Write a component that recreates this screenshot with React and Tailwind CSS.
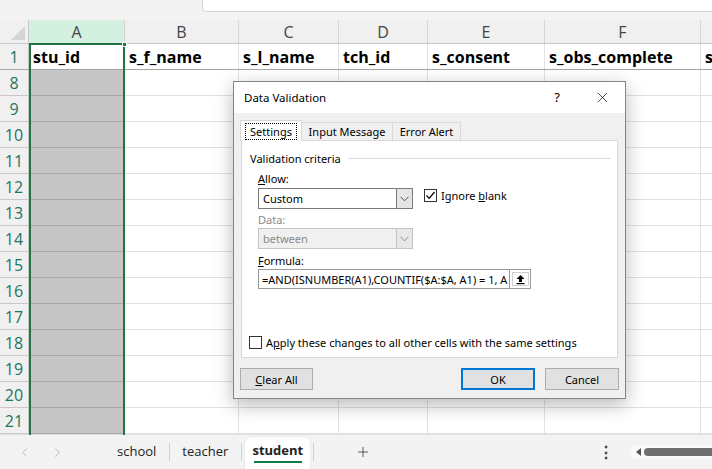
import React from 'react';
import { ChevronLeft, ChevronRight, Plus, X } from 'lucide-react';

const columns = [
  { letter: 'A', title: 'stu_id', width: 'w-[96px]' },
  { letter: 'B', title: 's_f_name', width: 'w-[114px]' },
  { letter: 'C', title: 's_l_name', width: 'w-[100px]' },
  { letter: 'D', title: 'tch_id', width: 'w-[89px]' },
  { letter: 'E', title: 's_consent', width: 'w-[117px]' },
  { letter: 'F', title: 's_obs_complete', width: 'w-[156px]' },
  { letter: '', title: 's', width: 'w-[100px]' },
];

const rows = ['8', '9', '10', '11', '12', '13', '14', '15', '16', '17', '18', '19', '20', '21'];

const Checkbox = ({ checked }) => (
  <div className="w-[13px] h-[13px] shrink-0 border border-[#333] bg-white flex items-center justify-center">
    {checked && (
      <svg width="11" height="11" viewBox="0 0 11 11">
        <path d="M1.5 5.5 L4.2 8.3 L9.5 2" fill="none" stroke="#000" strokeWidth="1.2" />
      </svg>
    )}
  </div>
);

const Chevron = ({ color }) => (
  <svg width="9" height="6" viewBox="0 0 9 6">
    <path d="M0.5 0.8 L4.5 4.8 L8.5 0.8" fill="none" stroke={color} strokeWidth="1" />
  </svg>
);

const DataValidation = () => (
  <div className="absolute left-[233px] top-[81px] w-[393px] h-[318px] border border-[#858585] bg-[#f0f0f0] shadow-[0_6px_18px_rgba(0,0,0,0.28)] text-[11px] text-black font-['Noto_Sans',sans-serif] leading-none">
    {/* title bar */}
    <div className="h-[31px] bg-white flex items-center pl-[10px] pr-[14px]">
      <span className="text-[11.5px]">Data Validation</span>
      <span className="ml-auto mr-[34px] text-[13px]">?</span>
      <X size={17} strokeWidth={1} />
    </div>

    {/* tabs */}
    <div className="flex items-end pl-[6px] pt-[7px]">
      <div className="w-[62px] h-[21px] bg-white border border-[#d9d9d9] border-b-0 flex items-center justify-center relative z-10 -mb-px">
        <span className="border border-dotted border-black px-[4px] py-[2px]">Settings</span>
      </div>
      <div className="w-[91px] h-[18px] border border-[#d9d9d9] border-l-0 border-b-0 bg-[#f0f0f0] flex items-center justify-center">Input Message</div>
      <div className="w-[68px] h-[18px] border border-[#d9d9d9] border-l-0 border-b-0 bg-[#f0f0f0] flex items-center justify-center">Error Alert</div>
    </div>

    {/* tab panel */}
    <div className="ml-[7px] w-[377px] h-[218px] bg-white border border-[#d9d9d9] flex flex-col">
      <div className="mt-[9px] h-[16px] flex items-center pl-[8px] pr-[6px]">
        <span>Validation criteria</span>
        <div className="flex-1 ml-[7px] h-px bg-[#dcdcdc]" />
      </div>

      <div className="pl-[16px] flex flex-col">
        <div className="mt-[5px] h-[14px] flex items-center">
          <span><span className="underline">A</span>llow:</span>
        </div>
        <div className="mt-[3px] flex items-start">
          <div className="w-[155px] h-[21px] border border-[#7a7a7a] bg-white flex items-center">
            <span className="pl-[4px]">Custom</span>
            <div className="ml-auto w-[16px] h-full border-l border-[#7a7a7a] bg-[#e5e5e5] flex items-center justify-center">
              <Chevron color="#555" />
            </div>
          </div>
          <div className="ml-[11px] mt-[1px] flex items-center">
            <Checkbox checked />
            <span className="ml-[4px]">Ignore <span className="underline">b</span>lank</span>
          </div>
        </div>

        <div className="mt-[3px] h-[14px] flex items-center text-[#8a8a8a]">Data:</div>
        <div className="mt-[2px] w-[155px] h-[21px] border border-[#c4c4c4] bg-[#f0f0f0] flex items-center text-[#8a8a8a]">
          <span className="pl-[4px]">between</span>
          <div className="ml-auto w-[16px] h-full border-l border-[#c4c4c4] bg-[#e8e8e8] flex items-center justify-center">
            <Chevron color="#888" />
          </div>
        </div>

        <div className="mt-[4px] h-[14px] flex items-center">
          <span><span className="underline">F</span>ormula:</span>
        </div>
        <div className="mt-[2px] flex h-[20px] w-[273px] border border-[#9a9a9a] bg-white">
          <div className="flex-1 overflow-hidden whitespace-nowrap flex items-center pl-[3px]">
            =AND(ISNUMBER(A1),COUNTIF($A:$A, A1) = 1, A
          </div>
          <div className="w-[21px] h-full border-l border-[#9a9a9a] bg-white flex items-center justify-center">
            <div className="w-[17px] h-[14px] border border-[#d0d0d0] flex items-center justify-center">
              <svg width="11" height="11" viewBox="0 0 11 11">
                <path d="M5.5 1 L1.5 5 H4 V8 H7 V5 H9.5 Z" fill="#000" />
                <rect x="1.5" y="9" width="8" height="1.2" fill="#000" />
              </svg>
            </div>
          </div>
        </div>
      </div>

      <div className="mt-[47px] pl-[7px] flex items-center">
        <Checkbox />
        <span className="ml-[4px]">A<span className="underline">p</span>ply these changes to all other cells with the same settings</span>
      </div>
    </div>

    {/* buttons */}
    <div className="mt-[10px] px-[6px] flex items-center">
      <div className="w-[73px] h-[22px] bg-[#e1e1e1] border border-[#adadad] flex items-center justify-center">
        <span><span className="underline">C</span>lear All</span>
      </div>
      <div className="ml-auto w-[74px] h-[22px] bg-[#e1e1e1] border-2 border-[#0078d7] flex items-center justify-center">OK</div>
      <div className="ml-[10px] w-[74px] h-[22px] bg-[#e1e1e1] border border-[#adadad] flex items-center justify-center">Cancel</div>
    </div>
  </div>
);

const App = () => {
  return (
    <div className="relative w-[712px] h-[469px] overflow-hidden bg-white font-['Open_Sans',sans-serif] flex flex-col">
      {/* formula bar strip */}
      <div className="h-[20px] shrink-0 bg-[#f3f3f3] flex">
        <div className="ml-[202px] flex-1 h-[13px] -mt-px bg-white border border-r-0 border-[#d3d3d3] rounded-bl-[5px]" />
      </div>

      {/* column headers */}
      <div className="h-[24px] shrink-0 flex bg-[#f0f0f0] border-b border-[#c8c8c8]">
        <div className="w-[29px] shrink-0 border-r border-[#c8c8c8] flex items-end justify-end p-[3px]">
          <svg width="14" height="14" viewBox="0 0 14 14">
            <path d="M14 0 L14 14 L0 14 Z" fill="#d4d4d4" />
          </svg>
        </div>
        {columns.map((c, i) => (
          <div
            key={i}
            className={`${c.width} shrink-0 flex items-center justify-center border-r border-[#d6d6d6] text-[16px] text-[#444] ${c.letter === 'A' ? 'bg-[#d3f0e0]' : ''}`}
          >
            {c.letter}
          </div>
        ))}
      </div>

      {/* row 1 (frozen header row) */}
      <div className="h-[26px] shrink-0 flex border-b border-[#a6a6a6]">
        <div className="w-[29px] shrink-0 bg-[#f0f0f0] border-r border-[#c8c8c8] flex items-center justify-center text-[16px] text-[#1d7560]">1</div>
        {columns.map((c, i) => (
          <div key={i} className={`${c.width} shrink-0 flex items-center pl-[4px] border-r border-[#e1e1e1] text-[16px] font-bold text-black whitespace-nowrap overflow-hidden`}>
            {c.title}
          </div>
        ))}
      </div>

      {/* body rows */}
      {rows.map((r) => (
        <div key={r} className="h-[26px] shrink-0 flex">
          <div className="w-[29px] shrink-0 bg-[#f0f0f0] border-r border-b border-[#c8c8c8] flex items-center justify-center text-[16px] text-[#1d7560]">{r}</div>
          {columns.map((c, i) => (
            <div
              key={i}
              className={`${c.width} shrink-0 border-r border-b ${c.letter === 'A' ? 'bg-[#c6c6c6] border-[#a9a9a9]' : 'border-[#e1e1e1]'}`}
            />
          ))}
        </div>
      ))}

      {/* sheet tabs */}
      <div className="flex-1 bg-[#f3f3f3] border-t border-[#e0e0e0] flex items-center text-[13px] text-[#222]">
        <ChevronLeft size={15} strokeWidth={1} className="ml-[17px] text-[#9a9a9a]" />
        <ChevronRight size={15} strokeWidth={1} className="ml-[18px] text-[#9a9a9a]" />
        <span className="ml-[52px]">school</span>
        <div className="ml-[13px] w-px h-[18px] bg-[#d0d0d0]" />
        <span className="ml-[12px]">teacher</span>
        <div className="ml-[13px] w-px h-[18px] bg-[#d0d0d0]" />
        <div className="ml-[3px] self-end h-[32px] w-[65px] bg-white rounded-t-[6px] flex flex-col items-center pt-[4px] shadow-[0_0_2px_rgba(0,0,0,0.12)]">
          <span className="font-bold leading-[18px]">student</span>
          <div className="mt-[2px] w-[48px] h-[2px] bg-[#107c41]" />
        </div>
        <div className="ml-[3px] w-px h-[18px] bg-[#d0d0d0]" />
        <Plus size={16} strokeWidth={1.2} className="ml-[41px] text-[#333]" />
        <span className="ml-auto mr-[16px] text-[16px] font-bold text-[#444]">⋮</span>
        <div className="w-[82px] h-[14px] bg-[#fafafa] rounded-l-full flex items-center pl-[6px]">
          <svg width="5" height="8" viewBox="0 0 5 8">
            <path d="M5 0 L0 4 L5 8 Z" fill="#555" />
          </svg>
          <div className="ml-[3px] flex-1 h-[8px] bg-[#707070] rounded-l-full" />
        </div>
      </div>

      {/* column A selection frame */}
      <div className="absolute left-[29px] top-[43px] w-[96px] h-[392px] border-x-2 border-t-2 border-[#217346]" />
      <div className="absolute left-[122px] top-[42px] w-[5px] h-[5px] bg-[#217346] border border-white" />

      <DataValidation />
    </div>
  );
};

export default App;
